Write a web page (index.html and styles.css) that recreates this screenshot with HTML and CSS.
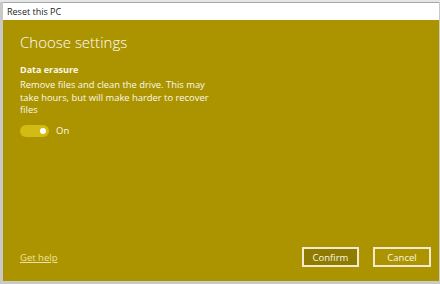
FILE: index.html
```html
<!DOCTYPE html>
<html lang="en">
<head>
  <meta charset="UTF-8">
  <title>Reset this PC</title>
  <link rel="stylesheet" href="styles.css">
</head>
<body>

  <div class="behind"></div>

  <div class="window">
    <div class="titlebar">Reset this PC</div>

    <div class="panel">
      <div class="content">
        <h1>Choose settings</h1>
        <h2>Data erasure</h2>
        <p class="desc">Remove files and clean the drive. This may take hours, but will make harder to recover files</p>
        <div class="toggle-row">
          <span class="toggle"><span class="thumb"></span></span>
          <span class="toggle-label">On</span>
        </div>
      </div>

      <div class="footer">
        <a href="#" class="help">Get help</a>
        <div class="actions">
          <button class="btn primary">Confirm</button>
          <button class="btn">Cancel</button>
        </div>
      </div>
    </div>
  </div>

</body>
</html>
```

FILE: styles.css
```css
body {
  margin: 0;
  background-color: #c9c9c9;
  font-family: "Open Sans", "Noto Sans", sans-serif;
  width: 440px;
  height: 284px;
  overflow: hidden;
}
.behind {
  height: 2px;
  background-color: #e6e6e6;
}
.window {
  margin-left: 3px;
  width: 436px;
  height: 279px;
  display: flex;
  flex-direction: column;
  border-top: 1px solid #a6a6a6;
  box-sizing: border-box;
}
.titlebar {
  height: 17px;
  background-color: #fff;
  font-size: 9px;
  line-height: 17px;
  padding-left: 4px;
  color: #1a1a1a;
}
.panel {
  flex: 1;
  background-color: #ac9400;
  display: flex;
  flex-direction: column;
  justify-content: space-between;
  padding: 12px 8px 14px 17px;
  color: #fbf8ea;
}
h1 {
  margin: 0 0 12px;
  font-size: 15px;
  line-height: 20px;
  font-weight: 300;
  color: #fff;
}
h2 {
  margin: 0 0 3px;
  font-size: 9px;
  line-height: 12px;
  font-weight: 700;
}
.desc {
  margin: 0 0 8px;
  font-size: 9.4px;
  line-height: 12.7px;
  width: 194px;
}
.toggle-row {
  display: flex;
  align-items: center;
  gap: 7px;
}
.toggle {
  width: 29px;
  height: 12px;
  border-radius: 6px;
  background-color: #d2bb12;
  display: flex;
  align-items: center;
  justify-content: flex-end;
  padding-right: 3px;
  box-sizing: border-box;
}
.thumb {
  width: 6px;
  height: 6px;
  border-radius: 50%;
  background-color: #fff;
}
.toggle-label {
  font-size: 9.5px;
  line-height: 12.7px;
}
.footer {
  display: flex;
  align-items: center;
  justify-content: space-between;
}
.help {
  color: #efe39f;
  font-size: 9.5px;
}
.actions {
  display: flex;
  gap: 14px;
}
.btn {
  width: 58px;
  height: 20px;
  border: 2px solid #f1ead0;
  background-color: transparent;
  color: #fbf8ea;
  font-family: "Open Sans", "Noto Sans", sans-serif;
  font-size: 9.5px;
  padding: 0;
}
.btn.primary {
  width: 57px;
  background-color: #8e7b00;
}
```
